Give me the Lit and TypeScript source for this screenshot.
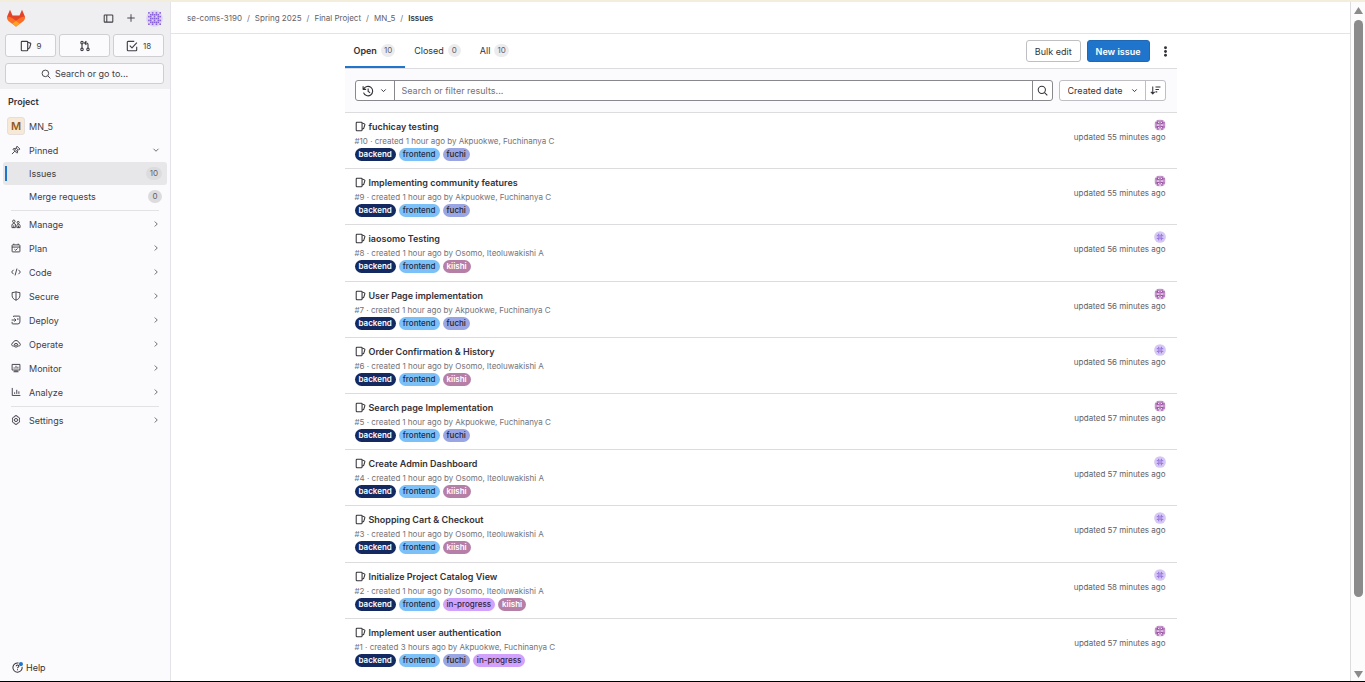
import { LitElement, html, css, svg, nothing, type TemplateResult } from "lit";
import { customElement, property } from "lit/decorators.js";

const ICONS: Record<string, TemplateResult> = {
  panel: svg`<rect x="1.75" y="2.75" width="12.5" height="10.5" rx="1"/><path d="M5.5 3v10"/>`,
  plus: svg`<path d="M8 2v12M2 8h12"/>`,
  issue: svg`<rect x="1.75" y="1.75" width="8.5" height="12.5" rx="1"/><path d="M10.500 3l3.200 1.200a1 1 0 0 1 .6 1.300L12.800 10.500l-2.300 1.500"/>`,
  merge: svg`<circle cx="4" cy="3.5" r="1.6"/><circle cx="4" cy="12.500" r="1.6"/><circle cx="12" cy="12.500" r="1.600"/><path d="M4 5v6M12 11V6a2 2 0 0 0-2-2H8M9.800 1.500L7.500 4l2.300 2.500"/>`,
  todo: svg`<path d="M11 1.750H2.750a1 1 0 0 0-1 1v10.500a1 1 0 0 0 1 1h10.500a1 1 0 0 0 1-1V9"/><path d="M5 7.500l3 3 6.500-7"/>`,
  search: svg`<circle cx="7" cy="7" r="5.250"/><path d="M11 11l4 4"/>`,
  pin: svg`<path d="M9.500 1.800l4.700 4.700-1.400.5-2.500 2.500.2 2.700-1 .9L3.200 6.800l.9-1 2.700.2L9.300 3.500zM6.200 9.800L1.500 14.500M5 5.500l5.500 5.500M8 4.500l3.500 3.500"/>`,
  manage: svg`<circle cx="4.500" cy="3.700" r="2"/><circle cx="11.500" cy="5.500" r="1.700"/><path d="M7 13.800H1.500V9.500c0-3 6-3 6 0v4.300M9.500 13.800h5v-3.300c0-3-5-3-5 0zM4.500 10v4M12 10.500V14"/>`,
  plan: svg`<rect x="1.750" y="3" width="12.500" height="11.250" rx="1"/><path d="M1.500 6.500h13M4.500 1v2M11.500 1v2M5.500 10l2 1.700 3-3"/>`,
  code: svg`<path d="M4 4.500L1 8l3 3.500M12 4.500L15 8l-3 3.500M9.500 2.500l-3 11"/>`,
  secure: svg`<path d="M8 1.200c2 .9 4 1.300 6.200 1.300v5c0 3.500-2.500 5.700-6.200 7.300C4.300 13.200 1.800 11 1.800 7.500v-5C4 2.500 6 2.100 8 1.200zM8 1.500v13"/>`,
  deploy: svg`<path d="M4 3V1.750h9.250a1 1 0 0 1 1 1V11a3.250 3.250 0 0 1-3.250 3.250H2.750a1 1 0 0 1-1-1V11M1 8h6.500M5.500 5.500L8 8l-2.500 2.500M11 5v3"/>`,
  operate: svg`<path d="M4.300 11.500C2.500 11.500 1 10.400 1 8.700c0-1.500 1-2.400 2.300-2.700C3.800 3.800 5.600 2.500 8 2.500s4.200 1.300 4.700 3.500C14 6.300 15 7.200 15 8.700c0 1.700-1.500 2.800-3.300 2.800"/><circle cx="8" cy="10" r="3"/><circle cx="8" cy="10" r=".6"/>`,
  monitor: svg`<path d="M1.750 2.250h12.500v9H1.750zM4 14h8M6.500 11.500V14M9.500 11.500V14M5 9V7M8 9V4.500M11 9V6"/>`,
  analyze: svg`<path d="M2 1.500v12h13M5.800 11V8.500M9.200 11V4.500M12.600 11V7"/>`,
  settings: svg`<path d="M6.300 1.200h3.400l.6 1.900 2 .2 1.700 3-1.300 1.700 1.300 1.700-1.700 3-2 .2-.6 1.900H6.300l-.6-1.900-2-.2-1.700-3L3.300 8 2 6.300l1.700-3 2-.2z"/><circle cx="8" cy="8" r="2.500"/>`,
  help: svg`<path d="M9.500 1.500A6.750 6.750 0 1 0 14.700 7M6 6.200c.2-2.600 4.200-2.400 4 0-.1 1.400-2 1.300-2 3M8 10.700v1.300"/><circle cx="13" cy="3" r="3" fill="#1f75cb" stroke="none"/>`,
  right: svg`<path d="M5.500 3l5 5-5 5"/>`,
  down: svg`<path d="M3 5.500l5 5 5-5"/>`,
  caret: svg`<path stroke-width="2.200" d="M3 5.500l5 5 5-5"/>`,
  history: svg`<path d="M2.200 5.500A6.300 6.300 0 1 1 2 10.200M1.500 1.800v4h4M8.200 4.500v4l2.600 1.800"/>`,
  sort: svg`<path d="M4 2v11M1.200 10L4 13l2.800-3M8 3h7.200M8 6.500h5M8 10h2.500"/>`,
  dots: svg`<g fill="currentColor" stroke="none"><circle cx="8" cy="2.500" r="2.100"/><circle cx="8" cy="8" r="2.100"/><circle cx="8" cy="13.500" r="2.100"/></g>`,
};

const icon = (name: string, size = 10) => html`<svg width=${size} height=${size} viewBox="0 0 16 16" fill="none"
  stroke="currentColor" stroke-width="1.500" stroke-linejoin="round" aria-hidden="true">${ICONS[name]}</svg>`;

const PATTERNS: Record<string, { color: string; tint: string; rows: string[] }> = {
  fuchi: { color: "#8e3a9a", tint: "#ecdcef", rows: ["0111110", "1101011", "1111111", "1001001", "1111111", "1101011", "0110110"] },
  kiishi: { color: "#8f6cdc", tint: "#d6c8f5", rows: ["0000000", "0010100", "0111110", "0011100", "0111110", "0010100", "0000000"] },
  me: { color: "#8a63d8", tint: "#ded2f7", rows: ["1010101", "0111110", "1101011", "0111110", "1101011", "0111110", "1010101"] },
};

const identicon = (who: string, size: number) => {
  const p = PATTERNS[who];
  return html`<svg width=${size} height=${size} viewBox="0 0 9 9" role="img" aria-label="Avatar">
    <circle cx="4.500" cy="4.500" r="4.400" fill=${p.tint}></circle>
    ${p.rows.map((row, y) => [...row].map((c, x) =>
      c === "1" ? svg`<rect x=${x + 1.1} y=${y + 1.1} width=".85" height=".85" fill=${p.color}></rect>` : nothing))}
  </svg>`;
};

const FUCHI = "Akpuokwe, Fuchinanya C";
const OSOMO = "Osomo, Iteoluwakishi A";

interface Issue { id: number; title: string; age: string; by: string; updated: number; labels: string[]; }

const ISSUES: Issue[] = [
  { id: 10, title: "fuchicay testing", age: "1 hour", by: FUCHI, updated: 55, labels: ["backend", "frontend", "fuchi"] },
  { id: 9, title: "Implementing community features", age: "1 hour", by: FUCHI, updated: 55, labels: ["backend", "frontend", "fuchi"] },
  { id: 8, title: "iaosomo Testing", age: "1 hour", by: OSOMO, updated: 56, labels: ["backend", "frontend", "kiishi"] },
  { id: 7, title: "User Page implementation", age: "1 hour", by: FUCHI, updated: 56, labels: ["backend", "frontend", "fuchi"] },
  { id: 6, title: "Order Confirmation & History", age: "1 hour", by: OSOMO, updated: 56, labels: ["backend", "frontend", "kiishi"] },
  { id: 5, title: "Search page Implementation", age: "1 hour", by: FUCHI, updated: 57, labels: ["backend", "frontend", "fuchi"] },
  { id: 4, title: "Create Admin Dashboard", age: "1 hour", by: OSOMO, updated: 57, labels: ["backend", "frontend", "kiishi"] },
  { id: 3, title: "Shopping Cart & Checkout", age: "1 hour", by: OSOMO, updated: 57, labels: ["backend", "frontend", "kiishi"] },
  { id: 2, title: "Initialize Project Catalog View", age: "1 hour", by: OSOMO, updated: 58, labels: ["backend", "frontend", "in-progress", "kiishi"] },
  { id: 1, title: "Implement user authentication", age: "3 hours", by: FUCHI, updated: 57, labels: ["backend", "frontend", "fuchi", "in-progress"] },
];

const base = css`
  * { box-sizing: border-box; }
  a { color: inherit; text-decoration: none; }
  button, input, select { font: inherit; color: inherit; margin: 0; }
  button { cursor: pointer; }
  ul { list-style: none; margin: 0; padding: 0; }
  svg { flex: none; display: block; }
`;

@customElement("issue-row")
class IssueRow extends LitElement {
  @property({ attribute: false }) issue!: Issue;

  static styles = [base, css`
    :host { display: flex; justify-content: space-between; padding: 6px 11px 6px 10px; border-top: 1px solid #dcdcde; }
    .title { display: flex; align-items: center; gap: 3px; font-size: 9px; line-height: 15px; font-weight: 600; color: #333238; }
    .meta { font-size: 8px; line-height: 14px; color: #737278; }
    .labels { display: flex; gap: 3px; }
    .label { border-radius: 7px; padding: 0 4px; font-size: 8px; line-height: 13px; font-weight: 500; }
    .backend { background: #13295f; color: #fff; font-weight: 600; }
    .frontend { background: #7cc0f8; color: #1f2a44; }
    .fuchi { background: #9aa5e4; color: #1f1e24; }
    .kiishi { background: #b57fa8; color: #fff; font-weight: 600; }
    .in-progress { background: #d2a1fb; color: #2f2140; }
    .side { display: flex; flex-direction: column; align-items: flex-end; font-size: 8px; line-height: 13px; color: #626168; }
  `];

  render() {
    const i = this.issue;
    return html`
      <div>
        <a class="title" href="#${i.id}">${icon("issue", 11)}${i.title}</a>
        <div class="meta">#${i.id} · created ${i.age} ago by <a href="#user">${i.by}</a></div>
        <div class="labels">${i.labels.map((l) => html`<a class="label ${l}" href="#${l}">${l}</a>`)}</div>
      </div>
      <div class="side">${identicon(i.by === FUCHI ? "fuchi" : "kiishi", 12)}<span>updated ${i.updated} minutes ago</span></div>`;
  }
}

@customElement("side-bar")
class SideBar extends LitElement {
  static styles = [base, css`
    :host { display: flex; flex-direction: column; background: #fbfafd; border-right: 1px solid #e3e3e8; font-size: 9px; color: #3f3e44; }
    .top { background: #efeff1; padding: 0 6px 5px 5px; }
    .brand { display: flex; align-items: center; height: 32px; gap: 12px; padding: 0 1px; }
    .brand .logo { margin-right: auto; }
    .plain { display: flex; border: 0; padding: 0; background: none; }
    .brand .avatar { margin-left: -2px; }
    .counts { display: grid; grid-template-columns: repeat(3, 1fr); gap: 3px; margin-bottom: 6px; }
    .box { display: flex; align-items: center; justify-content: center; gap: 5px; height: 23px; padding: 0; background: #fbfafd; border: 1px solid #cfcfd3; border-radius: 3px; }
    .counts .box { font-size: 8px; }
    .search { width: 100%; height: 21px; gap: 4px; }
    .heading { margin: 0; padding: 0 8px; font-size: 9px; line-height: 25px; font-weight: 600; color: #333238; }
    .item { display: flex; align-items: center; height: 24px; gap: 8px; padding: 0 10px 0 11px; }
    .item .end { margin-left: auto; }
    .item .project { margin: 0 -4px 0 -4px; width: 18px; height: 18px; border: 1px solid #e4dfdc; border-radius: 3px; background: #f8e9d6; color: #8f5a26; text-align: center; line-height: 16px; font-weight: 600; font-size: 11px; }
    .sub { display: flex; align-items: center; justify-content: space-between; height: 23px; margin: 0 3px; padding: 0 5px 0 26px; border-radius: 3px; }
    .current { background: linear-gradient(#1f75cb, #1f75cb) 2px center / 2px 15px no-repeat #e7e7e9; }
    .pill { min-width: 14px; border-radius: 7px; background: #dcdcdf; padding: 0 4px; font-size: 8px; line-height: 13px; text-align: center; color: #626168; }
    .rule { border: 0; height: 1px; background: #e1e1e6; margin: 2px 11px 1px; }
    .help { margin-top: auto; padding: 0 12px 2px; }
    .help a { display: flex; align-items: center; gap: 3px; height: 24px; color: #333238; }
  `];

  private item(name: string, ico: string) {
    return html`<li><a class="item" href="#${ico}">${icon(ico)}${name}<span class="end">${icon("right", 8)}</span></a></li>`;
  }

  render() {
    return html`
      <div class="top">
        <div class="brand">
          <a class="logo" href="#home" aria-label="Homepage">
            <svg width="20" height="18" viewBox="0 0 20 18">
              <path fill="#e24329" d="M4 .8 6.500 6.500h7L16 .8l3 7-9 9.700L1 7.800z"/>
              <path fill="#fc6d26" d="M1 7.500c2.500 0 5 1 9 4.300 4-3.300 6.500-4.300 9-4.300.3 2-.5 3.800-2 5L10 17.600 3 12.500c-1.500-1.200-2.300-3-2-5z"/>
              <path fill="#fca326" d="M10 11.800l3.700 3L10 17.600l-3.700-2.800z"/>
            </svg>
          </a>
          <button class="plain" aria-label="Toggle sidebar">${icon("panel", 11)}</button>
          <button class="plain" aria-label="Create new">${icon("plus")}</button>
          <button class="plain avatar" aria-label="User menu">${identicon("me", 17)}</button>
        </div>
        <div class="counts">
          <button class="box" aria-label="Assigned issues">${icon("issue", 12)}9</button>
          <button class="box" aria-label="Merge requests">${icon("merge", 12)}</button>
          <button class="box" aria-label="To-do items">${icon("todo", 12)}18</button>
        </div>
        <button class="box search">${icon("search")}Search or go to...</button>
      </div>
      <nav aria-label="Project">
        <h2 class="heading">Project</h2>
        <ul>
          <li><a class="item" href="#project"><span class="project">M</span>MN_5</a></li>
          <li><a class="item" href="#pinned">${icon("pin")}Pinned<span class="end">${icon("down", 8)}</span></a></li>
          <li><a class="sub current" href="#issues">Issues<span class="pill">10</span></a></li>
          <li><a class="sub" href="#mrs">Merge requests<span class="pill">0</span></a></li>
        </ul>
        <hr class="rule" />
        <ul>
          ${["Manage", "Plan", "Code", "Secure", "Deploy", "Operate", "Monitor", "Analyze"].map((n) => this.item(n, n.toLowerCase()))}
        </ul>
        <hr class="rule" />
        <ul>${this.item("Settings", "settings")}</ul>
      </nav>
      <div class="help"><a href="#help">${icon("help", 11)}Help</a></div>`;
  }
}

@customElement("app-root")
class AppRoot extends LitElement {
  static styles = [base, css`
    :host { display: block; font-family: Inter, "Liberation Sans", sans-serif; font-size: 9px; color: #333238; background: #fff; }
    .page { display: grid; grid-template-columns: 171px minmax(0, 1fr) 15px; min-height: 100vh; border-top: 2px solid #f3eedb; border-bottom: 1px solid #000; }
    .main { display: flex; flex-direction: column; }
    .crumbs ol { display: flex; align-items: center; height: 32px; margin: 0; padding: 0 16px; list-style: none; border-bottom: 1px solid #e3e3e8; font-size: 8px; color: #626168; }
    .crumbs li + li::before { content: "/"; margin: 0 5px; font-weight: 400; color: #737278; }
    .crumbs .here { font-weight: 600; color: #333238; }
    .content { flex: 1; display: flex; flex-direction: column; width: 100%; max-width: 832px; margin: 0 auto; padding-bottom: 7px; }
    .head { display: flex; align-items: stretch; height: 35px; border-bottom: 1px solid #dcdcde; }
    .tabs { display: flex; margin-right: auto; }
    .tab { display: flex; align-items: center; gap: 4px; padding: 0 10px 0 9px; border-bottom: 2px solid transparent; }
    .tab.on { font-weight: 600; border-color: #1f75cb; }
    .count { min-width: 13px; border-radius: 7px; background: #ececef; padding: 0 3px; font-size: 8px; line-height: 13px; font-weight: 400; text-align: center; color: #626168; }
    .actions { display: flex; align-items: center; gap: 6px; padding-right: 1px; }
    .btn { height: 22px; padding: 0 8px; border: 1px solid #bfbfc3; border-radius: 3px; background: #fff; }
    .primary { background: #1f75cb; border-color: #1f68b5; color: #fff; font-weight: 600; }
    .kebab { display: flex; border: 0; padding: 0; width: 20px; justify-content: center; background: none; }
    .filter { display: flex; gap: 6px; padding: 11px 11px 11px 10px; background: #fbfafd; }
    .bar { display: flex; flex: 1; height: 21px; border: 1px solid #89888d; border-radius: 3px; background: #fff; }
    .history { display: flex; align-items: center; justify-content: center; gap: 6px; width: 39px; padding: 0; border: 0; border-right: 1px solid #89888d; background: none; }
    .query { flex: 1; min-width: 0; border: 0; padding: 0 7px; background: none; outline: 0; }
    .query::placeholder { color: #737278; opacity: 1; }
    .go { display: flex; align-items: center; justify-content: center; width: 20px; padding: 0; border: 0; border-left: 1px solid #89888d; background: none; }
    .sort { display: flex; height: 21px; border: 1px solid #bfbfc3; border-radius: 3px; background: #fff; }
    .pick { display: grid; align-items: center; border-right: 1px solid #bfbfc3; }
    .pick select, .pick svg { grid-area: 1 / 1; }
    .pick select { appearance: none; border: 0; background: none; height: 19px; padding: 0 21px 0 8px; }
    .pick svg { justify-self: end; margin-right: 7px; pointer-events: none; }
    .dir { display: flex; align-items: center; justify-content: center; width: 19px; padding: 0; border: 0; background: none; }
    .list { flex: 1; display: grid; grid-auto-rows: 1fr; }
    .scroll { display: flex; flex-direction: column; align-items: center; justify-content: space-between; padding: 5px 1px 3px 2px; background: #fcfcfc; border-left: 1px solid #dcdcde; }
    .thumb { flex: 1; width: 9px; display: flex; flex-direction: column; margin: 5px 0; }
    .thumb::before { content: ""; height: calc(100% - 68px); border-radius: 5px; background: #8b8b8b; }
  `];

  render() {
    return html`
      <div class="page">
        <side-bar></side-bar>
        <div class="main">
          <nav class="crumbs" aria-label="Breadcrumb">
            <ol>
              <li><a href="#group">se-coms-3190</a></li>
              <li><a href="#term">Spring 2025</a></li>
              <li><a href="#final">Final Project</a></li>
              <li><a href="#project">MN_5</a></li>
              <li><a class="here" href="#issues" aria-current="page">Issues</a></li>
            </ol>
          </nav>
          <main class="content">
            <div class="head">
              <nav class="tabs" aria-label="Issue state">
                <a class="tab on" href="#open">Open<span class="count">10</span></a>
                <a class="tab" href="#closed">Closed<span class="count">0</span></a>
                <a class="tab" href="#all">All<span class="count">10</span></a>
              </nav>
              <div class="actions">
                <button class="btn">Bulk edit</button>
                <button class="btn primary">New issue</button>
                <button class="kebab" aria-label="Actions">${icon("dots", 11)}</button>
              </div>
            </div>
            <form class="filter" @submit=${(e: Event) => e.preventDefault()}>
              <div class="bar">
                <button type="button" class="history" aria-label="Recent searches">${icon("history", 12)}${icon("caret", 7)}</button>
                <input class="query" type="text" aria-label="Search or filter results" placeholder="Search or filter results..." />
                <button class="go" aria-label="Search">${icon("search", 11)}</button>
              </div>
              <div class="sort">
                <div class="pick">
                  <select aria-label="Sort by"><option>Created date</option></select>
                  ${icon("caret", 7)}
                </div>
                <button type="button" class="dir" aria-label="Sort direction">${icon("sort", 11)}</button>
              </div>
            </form>
            <div class="list" role="list">
              ${ISSUES.map((i) => html`<issue-row role="listitem" .issue=${i}></issue-row>`)}
            </div>
          </main>
        </div>
        <div class="scroll" aria-hidden="true">
          <svg width="9" height="8" viewBox="0 0 9 8"><path d="M4.500 0 9 7H0z" fill="#8b8b8b"/></svg>
          <div class="thumb"></div>
          <svg width="9" height="8" viewBox="0 0 9 8"><path d="M4.500 8 0 1h9z" fill="#8b8b8b"/></svg>
        </div>
      </div>`;
  }
}
